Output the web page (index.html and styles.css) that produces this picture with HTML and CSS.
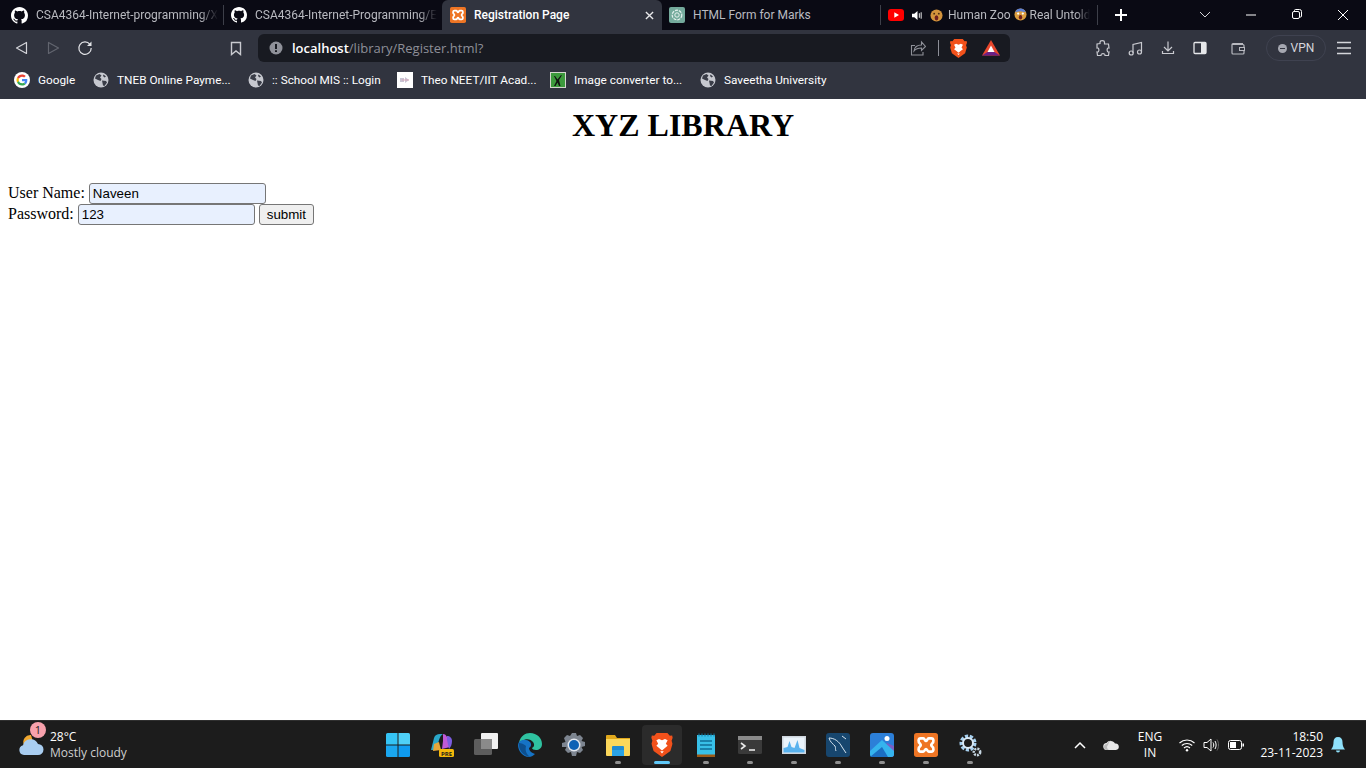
FILE: index.html
```html
<!DOCTYPE html>
<html>
    <head>
        <title>Registration Page</title>
        <link rel="stylesheet" href="styles.css">
    </head>
    <body>
        <svg class="icon-defs" width="0" height="0">
            <defs>
                <symbol id="github" viewBox="0 0 16 16"><path fill="#fff" d="M8 0C3.58 0 0 3.58 0 8c0 3.54 2.29 6.53 5.47 7.59.4.07.55-.17.55-.38 0-.19-.01-.82-.01-1.49-2.01.37-2.53-.49-2.69-.94-.09-.23-.48-.94-.82-1.13-.28-.15-.68-.52-.01-.53.63-.01 1.08.58 1.23.82.72 1.21 1.87.87 2.33.66.07-.52.28-.87.51-1.07-1.78-.2-3.64-.89-3.64-3.95 0-.87.31-1.59.82-2.15-.08-.2-.36-1.02.08-2.12 0 0 .67-.21 2.2.82.64-.18 1.32-.27 2-.27s1.36.09 2 .27c1.53-1.04 2.2-.82 2.2-.82.44 1.1.16 1.92.08 2.12.51.56.82 1.27.82 2.15 0 3.07-1.87 3.75-3.65 3.95.29.25.54.73.54 1.48 0 1.07-.01 1.93-.01 2.2 0 .21.15.46.55.38A8.01 8.01 0 0 0 16 8c0-4.42-3.58-8-8-8z"/></symbol>
                <symbol id="globe" viewBox="0 0 16 16"><circle cx="8" cy="8" r="7.5" fill="#c6c8cf"/><path fill="#3a3d48" d="M3 3.5 6.5 2l2 1.5L7 5.5l1.5 1.5-1 2L5 8 2 6.5zM9 8.500l4 .5 1 1.500-2.500 3.500-1.500-.5-.5-2.500zM10.500 2.500l2.500 2-1.500 1-1.500-1.500z"/></symbol>
                <symbol id="xampp" viewBox="0 0 18 18"><rect width="18" height="18" rx="2" fill="#ee7524"/><path fill="none" stroke="#fff" stroke-width="2" d="M5 4H7C8 4 8.200 6 9 6S10 4 11 4H13C15 4 15 7 13.500 8C13 8.500 13 9.500 13.500 10C15 11 15 14 13 14H11C10 14 9.800 12 9 12S8 14 7 14H5C3 14 3 11 4.500 10C5 9.500 5 8.500 4.500 8C3 7 3 4 5 4Z"/></symbol>
                <symbol id="brave" viewBox="0 0 18 20"><path fill="#f1511b" d="M4.500 0h9L15.500 2.200 17.500 2l.5 2-1 2.500.8 2.500-1.800 6L10.500 19 9 20l-1.500-1L2 15 .2 9 1 6.500 0 4l.5-2 2 .2z"/><path fill="#fff" d="M9 6 6.500 5 4.300 6l1.500 3-1.500 1.700 2.500 2L9 14.500l2.200-1.800 2.500-2L12.200 9l1.500-3-2.200-1zM7.500 15.200h3L9 17z"/></symbol>
                <symbol id="face-wow" viewBox="0 0 14 14"><circle cx="7" cy="7" r="6.500" fill="#d3933c"/><circle cx="4.500" cy="5" r="1" fill="#4a2a10"/><circle cx="9.500" cy="5" r="1" fill="#4a2a10"/><ellipse cx="7" cy="9.500" rx="2" ry="2.800" fill="#6e1f1f"/></symbol>
                <symbol id="face-scream" viewBox="0 0 14 14"><circle cx="7" cy="7" r="6.500" fill="#dc9d3f"/><path fill="#5a7fd6" d="M1.500 4.500C2 2 4.500.5 7 .5s5 1.500 5.500 4L7 3.500z"/><circle cx="4.500" cy="6" r="1.200" fill="#fff"/><circle cx="9.500" cy="6" r="1.200" fill="#fff"/><ellipse cx="7" cy="10" rx="1.800" ry="2.500" fill="#6e1f1f"/></symbol>
            </defs>
        </svg>

        <header class="browser">
            <div class="tab-strip">
                <div class="tab tab-1">
                    <svg class="tab-icon"><use href="#github"/></svg>
                    <span class="tab-title tab-fade">CSA4364-Internet-programming/X</span>
                </div>
                <div class="tab tab-2">
                    <svg class="tab-icon"><use href="#github"/></svg>
                    <span class="tab-title tab-fade">CSA4364-Internet-Programming/E</span>
                </div>
                <div class="tab tab-active">
                    <svg class="tab-icon"><use href="#xampp"/></svg>
                    <span class="tab-title">Registration Page</span>
                    <svg class="tab-close" viewBox="0 0 10 10"><path d="M1 1l8 8M9 1 1 9" stroke="#e8e8ea" stroke-width="1.500"/></svg>
                </div>
                <div class="tab tab-4">
                    <svg class="tab-icon" viewBox="0 0 16 16"><rect width="16" height="16" rx="2" fill="#74aa9c"/><circle cx="8" cy="8" r="4.800" fill="none" stroke="#e6f2ef" stroke-width="1.200" stroke-dasharray="3 1"/><circle cx="8" cy="8" r="2.200" fill="none" stroke="#e6f2ef"/></svg>
                    <span class="tab-title">HTML Form for Marks</span>
                </div>
                <div class="tab tab-5">
                    <svg class="tab-icon" viewBox="0 0 16 12"><rect width="16" height="12" rx="3" fill="#f00"/><path d="M6.300 3.300 11 6l-4.700 2.700z" fill="#fff"/></svg>
                    <svg class="tab-sound" viewBox="0 0 12 12"><path fill="#fff" d="M0 4h2.500L6 1v10L2.500 8H0z"/><path fill="none" stroke="#fff" d="M8 3.500v5M10 2.500v7"/></svg>
                    <svg class="tab-face"><use href="#face-wow"/></svg>
                    <span class="tab-title tab-fade">Human Zoo <svg class="inline-face"><use href="#face-scream"/></svg> Real Untold</span>
                </div>
                <svg class="new-tab" viewBox="0 0 12 12"><path d="M6 0v12M0 6h12" stroke="#fff" stroke-width="2"/></svg>
                <div class="window-controls">
                    <svg class="win-btn" viewBox="0 0 46 30"><path d="M18 12l5 5 5-5" fill="none" stroke="#d5d5d8"/></svg>
                    <svg class="win-btn" viewBox="0 0 46 30"><path d="M18 15h10" stroke="#fff"/></svg>
                    <svg class="win-btn" viewBox="0 0 46 30"><rect x="18.500" y="11.500" width="7" height="7" rx="1.500" fill="none" stroke="#fff"/><path d="M20.500 11v-.5a1 1 0 0 1 1-1h4a2 2 0 0 1 2 2v4.500a1 1 0 0 1-1 1H26" fill="none" stroke="#fff"/></svg>
                    <svg class="win-btn" viewBox="0 0 46 30"><path d="M18 10l10 10M28 10 18 20" stroke="#fff"/></svg>
                </div>
            </div>

            <div class="toolbar">
                <svg class="tool-btn" viewBox="0 0 32 32"><path d="M21.500 10.500v11L11.500 16z" fill="none" stroke="#d3d4d9" stroke-width="1.200" stroke-linejoin="round"/></svg>
                <svg class="tool-btn" viewBox="0 0 32 32"><path d="M11.500 10.500v11l10-5.500z" fill="none" stroke="#62656f" stroke-width="1.200" stroke-linejoin="round"/></svg>
                <svg class="tool-btn" viewBox="0 0 32 32"><path d="M21 12.500A6.200 6.200 0 1 0 22.200 16" fill="none" stroke="#e2e3e7" stroke-width="1.200"/><path d="M22.500 9.500v4.500h-4.500z" fill="#e2e3e7"/></svg>
                <svg class="tool-btn bookmark-btn" viewBox="0 0 32 32"><path d="M11.500 10.500h9v12L16 19l-4.500 3.500z" fill="none" stroke="#c9cad0" stroke-width="1.400"/></svg>
                <div class="url-bar">
                    <svg class="url-info" viewBox="0 0 14 14"><circle cx="7" cy="7" r="6.500" fill="#8f9199"/><path d="M6 3h2v5H6zM6 9.300h2v1.800H6z" fill="#181a21"/></svg>
                    <span class="url-text"><span class="url-host">localhost</span>/library/Register.html?</span>
                    <svg class="url-share" viewBox="0 0 16 16"><path d="M5 5.500H1.500v9.500h11.500v-3" fill="none" stroke="#8f9199" stroke-width="1.100"/><path d="M4 11c.5-4 3.500-6 7.500-6V2l4 4.500-4 4V8c-3 0-5.500.5-7.500 3z" fill="none" stroke="#8f9199" stroke-width="1.100"/></svg>
                    <span class="url-sep"></span>
                    <svg class="url-brave"><use href="#brave"/></svg>
                    <svg class="url-bat" viewBox="0 0 18 16"><path d="M9 0l9 15.500H0z" fill="#e8472c"/><path d="M9 5.500l3.500 6.500h-7z" fill="#fff"/><path d="M0 15.500 5.500 12h7l5.500 3.500z" fill="#6a1f86"/></svg>
                </div>
                <svg class="tool-btn ext-btn" viewBox="0 0 32 32"><path d="M13 10.500c0-2.500 4.500-2.500 4.500 0v1.500h4l.5 4c-2.500-.5-2.500 4.500 0 4l-.5 3.500h-3.500c.5-2.500-4.500-2.500-4 0H10.500l-.5-3.500c2.500.5 2.500-4.500 0-4v-4l3-.5z" fill="none" stroke="#c9cad0" stroke-width="1.200"/></svg>
                <svg class="tool-btn music-btn" viewBox="0 0 32 32"><path d="M13 21V12.500l8.500-2V20" fill="none" stroke="#c9cad0" stroke-width="1.200"/><circle cx="11.200" cy="21" r="2" fill="none" stroke="#c9cad0" stroke-width="1.200"/><circle cx="19.500" cy="20" r="2" fill="none" stroke="#c9cad0" stroke-width="1.200"/></svg>
                <svg class="tool-btn" viewBox="0 0 32 32"><path d="M16 9.500v9M12 15l4 4 4-4" fill="none" stroke="#c9cad0" stroke-width="1.200"/><path d="M10.500 19v2.500h11V19" fill="none" stroke="#c9cad0" stroke-width="1.200"/></svg>
                <svg class="tool-btn" viewBox="0 0 32 32"><rect x="10" y="10.500" width="12" height="11" rx="1" fill="none" stroke="#e6e7ea" stroke-width="1.300"/><rect x="17" y="10.500" width="5" height="11" fill="#e6e7ea"/></svg>
                <svg class="tool-btn wallet-btn" viewBox="0 0 32 32"><path d="M21 11.500H11a1 1 0 0 0-1 1V21a1 1 0 0 0 1 1h10a1 1 0 0 0 1-1v-7.500a1 1 0 0 0-1-1H10" fill="none" stroke="#b8b9c0" stroke-width="1.200"/><rect x="17.500" y="15.500" width="5" height="3" fill="#31343f" stroke="#b8b9c0"/></svg>
                <div class="vpn-pill">
                    <span class="vpn-dot"></span>
                    <span>VPN</span>
                </div>
                <svg class="tool-btn menu-btn" viewBox="0 0 32 32"><path d="M9 10.500h14M9 16h14M9 21.500h14" stroke="#d5d6db" stroke-width="1.300"/></svg>
            </div>

            <div class="bookmarks">
                <div class="bookmark">
                    <svg class="bm-icon" viewBox="0 0 48 48"><circle cx="24" cy="24" r="24" fill="#fff"/><g transform="translate(7.500 7.500) scale(.69)"><path fill="#EA4335" d="M24 9.500c3.540 0 6.710 1.220 9.210 3.600l6.850-6.850C35.900 2.380 30.470 0 24 0 14.620 0 6.510 5.380 2.560 13.220l7.980 6.190C12.430 13.720 17.740 9.500 24 9.500z"/><path fill="#4285F4" d="M46.980 24.550c0-1.570-.15-3.090-.38-4.550H24v9.020h12.940c-.58 2.960-2.260 5.480-4.780 7.180l7.730 6c4.510-4.180 7.090-10.360 7.090-17.650z"/><path fill="#FBBC05" d="M10.530 28.590c-.48-1.450-.76-2.990-.76-4.590s.27-3.140.76-4.590l-7.980-6.190C.92 16.460 0 20.120 0 24c0 3.880.92 7.540 2.560 10.780l7.970-6.190z"/><path fill="#34A853" d="M24 48c6.480 0 11.930-2.130 15.890-5.810l-7.730-6c-2.150 1.450-4.920 2.300-8.160 2.300-6.260 0-11.570-4.220-13.470-9.910l-7.980 6.190C6.510 42.620 14.620 48 24 48z"/></g></svg>
                    <span>Google</span>
                </div>
                <div class="bookmark">
                    <svg class="bm-icon"><use href="#globe"/></svg>
                    <span>TNEB Online Payme...</span>
                </div>
                <div class="bookmark">
                    <svg class="bm-icon"><use href="#globe"/></svg>
                    <span>:: School MIS :: Login</span>
                </div>
                <div class="bookmark">
                    <svg class="bm-icon" viewBox="0 0 16 16"><rect width="16" height="16" fill="#fff"/><path d="M3 6h4v4H3zM8 5l4 3-4 3z" fill="#c9c4d4"/><path d="M5 8h7" stroke="#d9a7b8"/></svg>
                    <span>Theo NEET/IIT Acad...</span>
                </div>
                <div class="bookmark">
                    <svg class="bm-icon" viewBox="0 0 16 16"><rect width="16" height="16" fill="#d3d6cd"/><rect x="1" y="1" width="14" height="14" fill="#3c9a3c"/><path d="M4 14l2.500-5L4 4l1 0 2.500 3.500L11 3l.8.500L9 8l1.500 6H9L7.500 10.500 5.500 14z" fill="#111"/></svg>
                    <span>Image converter to...</span>
                </div>
                <div class="bookmark">
                    <svg class="bm-icon"><use href="#globe"/></svg>
                    <span>Saveetha University</span>
                </div>
            </div>
        </header>

        <main class="page">
            <h1 class="page-title">XYZ LIBRARY</h1>
            <form class="register-form">
                <div class="form-row">
                    <label>User Name:</label>
                    <input class="field" type="text" value="Naveen">
                </div>
                <div class="form-row">
                    <label>Password:</label>
                    <input class="field" type="text" value="123">
                    <button class="submit-button" type="button">submit</button>
                </div>
            </form>
        </main>

        <footer class="taskbar">
            <div class="weather">
                <svg class="weather-icon" viewBox="0 0 26 22"><path d="M13 1a7 7 0 0 0-7 10h10z" fill="#f0a830"/><path d="M6 21a5 5 0 0 1-1-9.800A8 8 0 0 1 20 10a5.500 5.500 0 0 1 0 11z" fill="#a9cdf0"/></svg>
                <span class="weather-badge">1</span>
                <div class="weather-text">
                    <span class="weather-temp">28°C</span>
                    <span class="weather-desc">Mostly cloudy</span>
                </div>
            </div>

            <div class="task-icons">
                <div class="task-slot">
                    <svg viewBox="0 0 24 24"><path fill="#35c4f5" d="M0 1.500A1.500 1.500 0 0 1 1.500 0h10v11.500H0z"/><path fill="#4fd0f7" d="M12.500 0h10A1.500 1.500 0 0 1 24 1.500v10H12.500z"/><path fill="#1aa7f0" d="M0 12.500h11.500V24h-10A1.500 1.500 0 0 1 0 22.500z"/><path fill="#0f9bf0" d="M12.500 12.500H24v10a1.500 1.500 0 0 1-1.500 1.500h-10z"/></svg>
                </div>
                <div class="task-slot">
                    <svg viewBox="0 0 24 24"><path fill="#2aa7c9" d="M4 5c1-3 3-4 6-4h3c-2 1-3 3-4 6l-2 7c-.5 2-2 3-4 3H1z"/><path fill="#e6a73a" d="M4 11l5-2 2 8-8 1z"/><path fill="#c05ad6" d="M13 1c2 0 3 1 4 3l3 10-8 2 1-8z"/><path fill="#7b5ce0" d="M17 3c3 0 5 2 5 5s-1 6-3 8l-2-9z"/><rect x="9" y="16" width="15" height="8" rx="1.500" fill="#f5b90a"/><text x="16.500" y="22.700" class="pre-label">PRE</text></svg>
                </div>
                <div class="task-slot">
                    <svg viewBox="0 0 24 24"><rect x="0" y="6" width="18" height="16" rx="1.500" fill="#5d5d5d"/><rect x="7" y="0" width="17" height="16" rx="1" fill="#f0f0f0"/><rect x="7" y="6" width="11" height="10" fill="#8a8a8a"/></svg>
                </div>
                <div class="task-slot">
                    <svg viewBox="0 0 24 24"><path fill="#2fc2a0" d="M1 9C3 3 7 0 12 0c7 0 12 5 12 11 0 4-3 6-6 6-2 0-4-1-4-2 2-1 3-3 1-6-2-3-7-4-11-1z"/><path fill="#1673c5" d="M1 9c3-3 8-3 11 0 2 2 1 5-1 6 0 3 3 5 6 6-2 2-4 3-6 3C5 24 0 18 0 12c0-1 .5-2 1-3z"/><path fill="#0d4f8e" d="M1 10C0 16 5 23 12 24c-4-3-5-7-4-11-2-2-5-3-7-3z"/></svg>
                </div>
                <div class="task-slot">
                    <svg viewBox="0 0 24 24"><path fill="#7d8590" d="M10 0h4l1 3 3-1 3 3-1.500 3 3.500 1v4l-3.500 1L21 17l-3 3-3-1-1 4h-4l-1-4-3 1-3-3 1.500-3L0 14v-4l3.500-1L2 5l3-3 3 1z"/><circle cx="12" cy="12" r="6.500" fill="#e3e7ee"/><circle cx="12" cy="12" r="5" fill="#0f62b5"/></svg>
                </div>
                <div class="task-slot">
                    <svg viewBox="0 0 24 24"><path fill="#e0a81c" d="M0 3a1 1 0 0 1 1-1h8l2 3h13v4H0z"/><path fill="#fbd75b" d="M0 6h24v16a1 1 0 0 1-1 1H1a1 1 0 0 1-1-1z"/><rect x="6" y="13" width="12" height="10" rx="1" fill="#1f8ad1"/><rect x="6" y="17" width="12" height="6" fill="#2aa3e6"/></svg>
                    <span class="run-dot"></span>
                </div>
                <div class="task-slot task-active">
                    <svg viewBox="0 0 18 20"><use href="#brave"/></svg>
                    <span class="run-bar"></span>
                </div>
                <div class="task-slot">
                    <svg viewBox="0 0 24 24"><path fill="#38c0e8" d="M3 2h18v20H3z"/><path fill="#9c5a16" d="M3 21.500h18V24H3z"/><path d="M6 8h12M6 12h12M6 16h12" stroke="#0f6d96" stroke-width="1.600"/><path d="M5 .5v3M8 .5v3M11 .5v3M14 .5v3M17 .5v3M20 .5v3" stroke="#0f7fa8"/></svg>
                    <span class="run-dot"></span>
                </div>
                <div class="task-slot">
                    <svg viewBox="0 0 24 24"><rect y="3" width="24" height="18" rx="1.500" fill="#3a3a3a"/><rect y="3" width="24" height="4" fill="#8a8a8a"/><path d="M3 10l4 3-4 3" fill="none" stroke="#e8e8e8" stroke-width="1.600"/><path d="M11 17h6" stroke="#e8e8e8" stroke-width="1.600"/></svg>
                    <span class="run-dot"></span>
                </div>
                <div class="task-slot">
                    <svg viewBox="0 0 24 24"><rect y="3" width="24" height="18" fill="#cfd6de"/><rect x="1.500" y="4.500" width="21" height="15" fill="#eaf3fb"/><path d="M1.500 19.500V15l4-1 2-6 2 6 3 1 3-8 2 8 5 2v2.500z" fill="#59b2ee"/></svg>
                    <span class="run-dot"></span>
                </div>
                <div class="task-slot">
                    <svg viewBox="0 0 24 24"><rect width="24" height="24" rx="3" fill="#17466e"/><path d="M3 5c5 0 10 3 13 9l4 6M3 5c1 4 4 6 6 8 1 2 0 3 1 5M16 3l4 3" fill="none" stroke="#d5e3ee" stroke-width="1"/></svg>
                    <span class="run-dot"></span>
                </div>
                <div class="task-slot">
                    <svg viewBox="0 0 24 24"><rect width="24" height="24" rx="3" fill="#2c7fd8"/><path d="M24 3v18a3 3 0 0 1-3 3h-3l-6-8 5-6 7 3z" fill="#7a5fc4"/><path d="M0 18 12 7l12 11v3a3 3 0 0 1-3 3H3a3 3 0 0 1-3-3z" fill="#35b4ee"/><path d="M0 24 12 14l6 10z" fill="#1b6ec2"/><circle cx="17" cy="5.500" r="2.500" fill="#fff"/></svg>
                    <span class="run-dot"></span>
                </div>
                <div class="task-slot">
                    <svg><use href="#xampp"/></svg>
                    <span class="run-dot"></span>
                </div>
                <div class="task-slot">
                    <svg viewBox="0 0 24 24"><circle cx="10" cy="10" r="6.500" fill="none" stroke="#a6d0f0" stroke-width="4" stroke-dasharray="3 1.500"/><circle cx="10" cy="10" r="5" fill="none" stroke="#d9e8f5" stroke-width="2"/><circle cx="19" cy="19" r="3.200" fill="none" stroke="#c5d5e0" stroke-width="2.500" stroke-dasharray="2 1"/></svg>
                    <span class="run-dot"></span>
                </div>
            </div>

            <div class="tray">
                <svg class="tray-chevron" viewBox="0 0 12 8"><path d="M1 7l5-5 5 5" fill="none" stroke="#fff" stroke-width="1.500"/></svg>
                <svg class="tray-cloud" viewBox="0 0 16 10"><path d="M4 10a3.500 3.500 0 0 1-.5-7A5 5 0 0 1 12 3.500 3.200 3.200 0 0 1 13 10z" fill="#e8e8e8"/><path d="M4 10a3 3 0 0 1 0-6 4 4 0 0 1 4-3 5 5 0 0 0-3 4 3 3 0 0 0 3 5z" fill="#bbb"/></svg>
                <div class="tray-lang">
                    <span>ENG</span>
                    <span>IN</span>
                </div>
                <svg class="tray-wifi" viewBox="0 0 16 14"><path d="M.5 5a11 11 0 0 1 15 0M2.800 7.500a7.800 7.800 0 0 1 10.400 0M5 10a4.500 4.500 0 0 1 6 0" fill="none" stroke="#fff" stroke-width="1.100"/><circle cx="8" cy="12.300" r="1.200" fill="#fff"/></svg>
                <svg class="tray-volume" viewBox="0 0 16 14"><path d="M1 4.500h3L8 1v12L4 9.500H1z" fill="none" stroke="#fff"/><path d="M10 4.500c1 1.500 1 3.500 0 5M12 3c1.500 2.500 1.500 5.500 0 8" fill="none" stroke="#fff"/><path d="M14 1.500c2 3 2 8 0 11" fill="none" stroke="#666"/></svg>
                <svg class="tray-battery" viewBox="0 0 16 10"><rect x=".5" y=".5" width="13" height="9" rx="2" fill="none" stroke="#fff"/><rect x="2" y="2" width="6" height="6" fill="#fff"/><rect x="14.500" y="3.500" width="1.500" height="3" fill="#fff"/></svg>
                <div class="tray-clock">
                    <span>18:50</span>
                    <span>23-11-2023</span>
                </div>
                <svg class="tray-bell" viewBox="0 0 14 16"><path d="M7 0c3 0 4.500 2 4.500 5 0 3 .5 5 2.500 7.500H0C2 10 2.500 8 2.500 5c0-3 1.500-5 4.500-5z" fill="#8fe1fb"/><path d="M5 13.500h4a2 2 0 0 1-4 0z" fill="#8fe1fb"/></svg>
            </div>
        </footer>
    </body>
</html>
```

FILE: styles.css
```css
body {
    margin: 0;
    height: 768px;
    display: flex;
    flex-direction: column;
    overflow: hidden;
    background-color: white;
    font-family: "Liberation Serif", serif;
}

.icon-defs {
    position: absolute;
}

/* browser frame */
.browser {
    background-color: #31343f;
    font-family: Roboto, sans-serif;
    font-size: 12px;
    color: white;
}

.tab-strip {
    height: 30px;
    display: flex;
    align-items: center;
    background-color: #0a0a14;
}

.tab {
    height: 30px;
    flex: none;
    box-sizing: border-box;
    display: flex;
    align-items: center;
    color: #b9bac0;
    white-space: nowrap;
    overflow: hidden;
}

.tab-1 {
    width: 224px;
    padding-left: 11px;
}

.tab-2 {
    width: 218px;
    padding-left: 7px;
}

.tab-active {
    width: 220px;
    padding-left: 8px;
    background-color: #31343f;
    border-radius: 6px 6px 0 0;
    color: white;
    font-weight: 500;
}

.tab-4 {
    width: 219px;
    padding-left: 7px;
}

.tab-5 {
    width: 217px;
    padding-left: 7px;
}

.tab-1::after,
.tab-4::after,
.tab-5::after {
    content: "";
    width: 1px;
    height: 20px;
    margin-left: auto;
    background-color: #3d3f49;
    flex: none;
}

.tab-icon {
    width: 16px;
    height: 16px;
    flex: none;
    margin-right: 8px;
}

.tab-1 .tab-icon {
    width: 17px;
    height: 17px;
}

.tab-fade {
    -webkit-mask-image: linear-gradient(to right, black 90%, transparent);
}

.tab-active .tab-title {
    width: 171px;
}

.tab-close {
    width: 9px;
    height: 9px;
    flex: none;
}

.tab-sound {
    width: 11px;
    height: 11px;
    flex: none;
    margin-right: 7px;
}

.tab-face {
    width: 13px;
    height: 13px;
    flex: none;
    margin-right: 5px;
}

.inline-face {
    width: 13px;
    height: 13px;
    vertical-align: -2px;
}

.new-tab {
    width: 12px;
    height: 12px;
    flex: none;
    margin-left: 17px;
}

.window-controls {
    margin-left: auto;
    display: flex;
}

.win-btn {
    width: 46px;
    height: 30px;
}

.toolbar {
    height: 36px;
    display: flex;
    align-items: center;
    padding-left: 5px;
}

.tool-btn {
    width: 32px;
    height: 32px;
    flex: none;
}

.bookmark-btn {
    margin-left: 119px;
}

.url-bar {
    width: 752px;
    height: 28px;
    margin-left: 6px;
    flex: none;
    box-sizing: border-box;
    padding-left: 11px;
    display: flex;
    align-items: center;
    background-color: #181a21;
    border-radius: 6px;
    font-family: "Open Sans", sans-serif;
    font-size: 13px;
    color: #8d8f98;
}

.url-info {
    width: 14px;
    height: 14px;
    margin-right: 9px;
}

.url-host {
    color: white;
    font-weight: 600;
}

.url-share {
    width: 16px;
    height: 16px;
    margin-left: auto;
}

.url-sep {
    width: 1px;
    height: 16px;
    margin-left: 12px;
    background-color: #8d8f98;
}

.url-brave {
    width: 17px;
    height: 19px;
    margin-left: 11px;
}

.url-bat {
    width: 18px;
    height: 16px;
    margin-left: 15px;
    margin-right: 10px;
}

.ext-btn {
    margin-left: 77px;
}

.music-btn {
    margin-left: 1px;
}

.wallet-btn {
    margin-left: 6px;
}

.vpn-pill {
    width: 60px;
    height: 26px;
    margin-left: 12px;
    flex: none;
    box-sizing: border-box;
    display: flex;
    align-items: center;
    justify-content: center;
    gap: 4px;
    border: 1px solid #3f4250;
    border-radius: 13px;
    color: #d5d6db;
}

.vpn-dot {
    width: 9px;
    height: 9px;
    border-radius: 50%;
    background-color: #a5a7b0;
    display: flex;
    align-items: center;
    justify-content: center;
}

.vpn-dot::before {
    content: "";
    width: 5px;
    height: 1px;
    background-color: #31343f;
}

.menu-btn {
    margin-left: 2px;
}

.bookmarks {
    height: 33px;
    box-sizing: border-box;
    padding: 0 0 6px 14px;
    display: grid;
    grid-template-columns: 79px 155px 149px 153px 150px auto;
    align-items: center;
    font-size: 11.8px;
}

.bookmark {
    display: flex;
    align-items: center;
    gap: 8px;
    white-space: nowrap;
}

.bm-icon {
    width: 16px;
    height: 16px;
    flex: none;
}

/* page content */
.page {
    flex: 1;
    padding: 8px;
    color: black;
}

.page-title {
    margin: 0 0 39px;
    text-align: center;
    font-size: 32px;
}

.form-row {
    display: flex;
    align-items: center;
    height: 21px;
    font-size: 16px;
}

.form-row label {
    margin-bottom: 2px;
}

.field {
    width: 177px;
    height: 21px;
    box-sizing: border-box;
    margin-left: 4px;
    padding: 1px 3px;
    border: 1px solid #767676;
    border-radius: 3px;
    background-color: #e8f0fe;
    font-family: "Liberation Sans", sans-serif;
    font-size: 13.33px;
    color: black;
}

.submit-button {
    height: 21px;
    margin-left: 4px;
    padding: 1px 7px;
    border: 1px solid #767676;
    border-radius: 3px;
    background-color: #efefef;
    font-family: "Liberation Sans", sans-serif;
    font-size: 13.33px;
    color: black;
}

/* windows taskbar */
.taskbar {
    height: 48px;
    flex: none;
    box-sizing: border-box;
    position: relative;
    display: flex;
    align-items: center;
    background-color: #1c1c1c;
    border-top: 1px solid #2f2f2f;
    font-family: "Open Sans", sans-serif;
    font-size: 12px;
    color: white;
}

.weather {
    width: 376px;
    box-sizing: border-box;
    padding-left: 18px;
    display: flex;
    align-items: center;
    position: relative;
}

.weather-icon {
    width: 26px;
    height: 22px;
    margin-right: 6px;
}

.weather-badge {
    position: absolute;
    left: 30px;
    top: -7px;
    width: 16px;
    height: 16px;
    border-radius: 50%;
    background-color: #f7a1ac;
    color: #1c1c1c;
    font-size: 11px;
    line-height: 16px;
    text-align: center;
}

.weather-text {
    display: flex;
    flex-direction: column;
    line-height: 16px;
}

.weather-desc {
    color: #cfcfcf;
}

.task-icons {
    display: flex;
}

.task-slot {
    width: 40px;
    height: 40px;
    margin: 0 2px;
    position: relative;
    display: flex;
    align-items: center;
    justify-content: center;
    border-radius: 4px;
}

.task-slot svg {
    width: 24px;
    height: 24px;
}

.task-active {
    background-color: #2b2b2b;
}

.run-dot {
    position: absolute;
    left: 17px;
    bottom: 1px;
    width: 6px;
    height: 3px;
    border-radius: 2px;
    background-color: #8f8f8f;
}

.run-bar {
    position: absolute;
    left: 12px;
    bottom: 1px;
    width: 16px;
    height: 3px;
    border-radius: 2px;
    background-color: #5fc8f8;
}

.pre-label {
    font-size: 6px;
    font-weight: 700;
    text-anchor: middle;
    fill: #1c1c1c;
}

.tray {
    flex: 1;
    display: flex;
    align-items: center;
    padding-left: 82px;
}

.tray-chevron {
    width: 12px;
    height: 8px;
}

.tray-cloud {
    width: 16px;
    height: 10px;
    margin-left: 17px;
}

.tray-lang {
    width: 30px;
    margin-left: 16px;
    display: flex;
    flex-direction: column;
    align-items: center;
    line-height: 16px;
}

.tray-wifi {
    width: 16px;
    height: 14px;
    margin-left: 14px;
}

.tray-volume {
    width: 16px;
    height: 14px;
    margin-left: 8px;
}

.tray-battery {
    width: 16px;
    height: 10px;
    margin-left: 9px;
}

.tray-clock {
    width: 79px;
    display: flex;
    flex-direction: column;
    align-items: flex-end;
    line-height: 16px;
}

.tray-bell {
    width: 14px;
    height: 16px;
    margin-left: 8px;
}
```
